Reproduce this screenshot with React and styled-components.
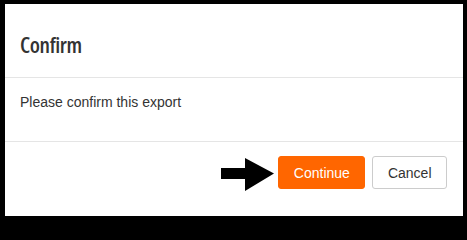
import React from 'react';
import styled, { createGlobalStyle } from 'styled-components';

const GlobalStyle = createGlobalStyle`
  html, body {
    margin: 0;
    padding: 0;
    background: #000;
  }
  * {
    box-sizing: border-box;
  }
`

const Frame = styled.div`
  width: 467px;
  height: 222px;
  border-style: solid;
  border-color: #000;
  border-width: 4px 4px 6px 5px;
  background: #fff;
  display: flex;
  flex-direction: column;
  font-family: "Liberation Sans", Arial, sans-serif;
  color: #333;
`

const Header = styled.div`
  height: 74px;
  padding: 29px 15px 0;
  border-bottom: 1px solid #e5e5e5;
`

const Title = styled.h4`
  margin: 0;
  font-family: "Open Sans", "Roboto Condensed", sans-serif;
  font-stretch: condensed;
  font-weight: 600;
  font-size: 22px;
  line-height: 22px;
  letter-spacing: -0.4px;
  color: #333;
`

const Body = styled.div`
  height: 64px;
  padding: 14px 15px 0;
  border-bottom: 1px solid #e5e5e5;
  font-size: 14px;
  line-height: 20px;
`

const Footer = styled.div`
  flex: 1;
  display: flex;
  justify-content: flex-end;
  align-items: flex-start;
  padding: 14px 16px 0;
`

const Arrow = styled.svg`
  display: block;
  margin-right: 3px;
`

const Button = styled.button`
  height: 33px;
  padding: 0 14.5px;
  margin-left: ${p => (p.$gap ? '7px' : '0')};
  border: 1px solid ${p => (p.$primary ? '#ff6600' : '#cccccc')};
  border-radius: 3px;
  background: ${p => (p.$primary ? '#ff6600' : '#ffffff')};
  color: ${p => (p.$primary ? '#ffffff' : '#333333')};
  font-family: "Liberation Sans", Arial, sans-serif;
  font-size: 14px;
  line-height: 20px;
  cursor: pointer;
`

export default function App() {
  return (
    <>
      <GlobalStyle />
      <Frame>
        <Header>
          <Title>Confirm</Title>
        </Header>
        <Body>Please confirm this export</Body>
        <Footer>
          <Arrow width="54" height="36" viewBox="0 0 54 36">
            <path d="M0 12 H24 V2 L53 17.5 L24 35 V23 H0 Z" fill="#000" />
          </Arrow>
          <Button $primary>Continue</Button>
          <Button $gap>Cancel</Button>
        </Footer>
      </Frame>
    </>
  );
}
